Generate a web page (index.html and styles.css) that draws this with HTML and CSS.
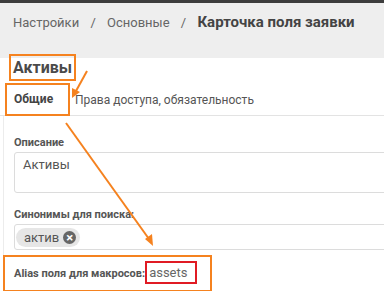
FILE: index.html
```html
<!DOCTYPE html>
<html lang="ru">
<head>
    <meta charset="UTF-8">
    <title>Карточка поля заявки</title>
    <link rel="stylesheet" href="styles.css">
</head>
<body>
    <div class="topline"></div>
    <div class="header">
        <span class="crumb">Настройки</span>
        <span class="sep">/</span>
        <span class="crumb">Основные</span>
        <span class="sep">/</span>
        <span class="crumb current">Карточка поля заявки</span>
    </div>

    <div class="content">
        <h1 class="title"><span class="mark">Активы</span></h1>

        <div class="tabs">
            <div class="tab active">Общие</div>
            <div class="tab">Права доступа, обязательность</div>
        </div>

        <div class="panel">
            <div class="field">
                <label>Описание</label>
                <div class="textarea">Активы</div>
            </div>

            <div class="field">
                <label>Синонимы для поиска:</label>
                <div class="tags-input">
                    <span class="tag">актив <span class="tag-x">&times;</span></span>
                </div>
            </div>

            <div class="alias">
                <b>Alias поля для макросов:</b><span class="alias-value">assets</span>
            </div>
        </div>
    </div>

    <!-- annotation arrows -->
    <svg class="arrows" width="384" height="301" viewBox="0 0 384 301">
        <line x1="87" y1="71" x2="76" y2="91" />
        <polygon points="72,98 72,88 80,92" />
        <line x1="66" y1="123" x2="149" y2="239" />
        <polygon points="153,246 145,239 152,234" />
    </svg>
</body>
</html>
```

FILE: styles.css
```css
:root {
    --orange: #f5821f;
    --text: #555;
    --line: #e3e3e3;
}

body {
    margin: 0;
    font-family: Roboto, 'Liberation Sans', sans-serif;
    color: var(--text);
    background: #fff;
    overflow: hidden;
}

.topline {
    height: 3px;
    background: #3d3d3d;
}

.header {
    background: #eeeeee;
    height: 55px;
    box-sizing: border-box;
    padding: 10px 0 0 13px;
    font-size: 13px;
    line-height: 18px;
    white-space: nowrap;
    color: #666;
}

.sep {
    margin: 0 8px;
}

.current {
    font-size: 15px;
    font-weight: bold;
    color: #444;
}

.content {
    position: relative;
}

.title {
    margin: 0;
    padding: 0 0 0 13px;
    font-size: 16px;
    color: #4a4a4a;
    line-height: 19px;
}

.mark {
    outline: 2px solid var(--orange);
    outline-offset: 2px;
}

.tabs {
    display: flex;
    margin-top: 7px;
    height: 31px;
    align-items: center;
    border-bottom: 1px solid var(--line);
    font-size: 12px;
    white-space: nowrap;
}

.tab {
    padding-left: 6px;
}

.tab.active {
    font-weight: bold;
    color: #444;
    outline: 2px solid var(--orange);
    outline-offset: -1px;
    height: 31px;
    line-height: 31px;
    margin-left: 6px;
    padding-left: 8px;
    box-sizing: border-box;
    width: 63px;
}

.panel {
    margin-left: 3px;
    border-left: 1px solid #ececec;
    padding: 20px 0 0 10px;
}

.field {
    margin-bottom: 15px;
}

label {
    display: block;
    font-size: 11px;
    line-height: 14px;
    font-weight: bold;
    color: #555;
    margin-bottom: 2px;
}

.textarea {
    height: 41px;
    box-sizing: border-box;
    width: 400px;
    border: 1px solid #dcdcdc;
    border-radius: 3px;
    padding: 4px 8px;
    font-size: 13px;
}

.tags-input {
    height: 26px;
    box-sizing: border-box;
    width: 400px;
    border: 1px solid #dcdcdc;
    border-radius: 3px;
    padding: 3px 1px;
}

.tag {
    display: inline-flex;
    align-items: center;
    gap: 4px;
    background: #e6e6e6;
    border-radius: 10px;
    height: 19px;
    padding: 0 4px 0 8px;
    font-size: 13px;
    color: #555;
    box-sizing: border-box;
    vertical-align: top;
}

.tag-x {
    display: inline-block;
    width: 13px;
    height: 13px;
    border-radius: 50%;
    background: #666;
    color: #fff;
    font-size: 13px;
    font-weight: bold;
    line-height: 13px;
    text-align: center;
}

.alias {
    font-size: 11px;
    line-height: 14px;
    white-space: nowrap;
    margin: -9px 0 0 -10px;
    padding: 10px 0 10px 10px;
    outline: 2px solid var(--orange);
    outline-offset: -1px;
    width: 197px;
}

.alias b {
    margin-right: 1px;
}

.alias-value {
    font-size: 13px;
    color: #666;
    outline: 2px solid #e01b24;
    outline-offset: 2px;
    margin-left: 3px;
    padding: 0 6px 0 0;
}

.arrows {
    position: absolute;
    left: 0;
    top: 0;
}

.arrows line {
    stroke: var(--orange);
    stroke-width: 2;
}

.arrows polygon {
    fill: var(--orange);
}
```
